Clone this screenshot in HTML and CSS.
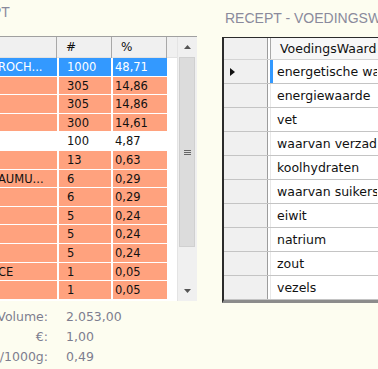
FILE: index.html
```html
<!DOCTYPE html>
<html>
<head>
    <title>Recept</title>
    <link rel="stylesheet" href="styles.css">
</head>
<body>
    <div class="page">
        <!-- Ingrediënten van het recept -->
        <section class="panel panel-left">
            <div class="panel-title title-left">RECEPT</div>
            <div class="grid-left">
                <div class="ltable">
                    <div class="lhead"><span></span><span>#</span><span>%</span><span></span></div>
                    <div class="lrows">
                        <div class="lrow selected"><span class="name">ROCH...</span><span class="num">1000</span><span class="pct">48,71</span></div>
                        <div class="lrow"><span class="name"></span><span class="num">305</span><span class="pct">14,86</span></div>
                        <div class="lrow"><span class="name"></span><span class="num">305</span><span class="pct">14,86</span></div>
                        <div class="lrow"><span class="name"></span><span class="num">300</span><span class="pct">14,61</span></div>
                        <div class="lrow plain"><span class="name"></span><span class="num">100</span><span class="pct">4,87</span></div>
                        <div class="lrow"><span class="name"></span><span class="num">13</span><span class="pct">0,63</span></div>
                        <div class="lrow"><span class="name">AUMU...</span><span class="num">6</span><span class="pct">0,29</span></div>
                        <div class="lrow"><span class="name"></span><span class="num">6</span><span class="pct">0,29</span></div>
                        <div class="lrow"><span class="name"></span><span class="num">5</span><span class="pct">0,24</span></div>
                        <div class="lrow"><span class="name"></span><span class="num">5</span><span class="pct">0,24</span></div>
                        <div class="lrow"><span class="name"></span><span class="num">5</span><span class="pct">0,24</span></div>
                        <div class="lrow"><span class="name">CE</span><span class="num">1</span><span class="pct">0,05</span></div>
                        <div class="lrow"><span class="name"></span><span class="num">1</span><span class="pct">0,05</span></div>
                    </div>
                </div>
                <div class="vscroll">
                    <div class="vbtn">
                        <svg width="7" height="4" viewBox="0 0 7 4"><polygon points="0,4 3.5,0 7,4" fill="#555"/></svg>
                    </div>
                    <div class="vthumb">
                        <svg width="7" height="5" viewBox="0 0 7 5"><path d="M0 0.5h7M0 2.5h7M0 4.5h7" stroke="#666" stroke-width="1"/></svg>
                    </div>
                    <div class="vtrack"></div>
                    <div class="vbtn">
                        <svg width="7" height="4" viewBox="0 0 7 4"><polygon points="0,0 3.5,4 7,0" fill="#555"/></svg>
                    </div>
                </div>
            </div>
            <div class="totals">
                <span class="label">Volume:</span><span class="value">2.053,00</span>
                <span class="label">€:</span><span class="value">1,00</span>
                <span class="label">€/1000g:</span><span class="value">0,49</span>
            </div>
        </section>

        <!-- Voedingswaarden -->
        <section class="panel panel-right">
            <div class="panel-title title-right">RECEPT - VOEDINGSWAARDEN</div>
            <div class="grid-right">
                <div class="rrow rhead"><span class="rh"></span><span class="rcell">VoedingsWaarde</span><span class="rfill"></span></div>
                <div class="rrow current">
                    <span class="rh">
                        <svg width="5" height="8" viewBox="0 0 5 8"><polygon points="0,0 5,4 0,8" fill="#111"/></svg>
                    </span>
                    <span class="rcell">energetische waarde</span><span class="rfill"></span>
                </div>
                <div class="rrow"><span class="rh"></span><span class="rcell">energiewaarde</span><span class="rfill"></span></div>
                <div class="rrow"><span class="rh"></span><span class="rcell">vet</span><span class="rfill"></span></div>
                <div class="rrow"><span class="rh"></span><span class="rcell">waarvan verzadigd</span><span class="rfill"></span></div>
                <div class="rrow"><span class="rh"></span><span class="rcell">koolhydraten</span><span class="rfill"></span></div>
                <div class="rrow"><span class="rh"></span><span class="rcell">waarvan suikers</span><span class="rfill"></span></div>
                <div class="rrow"><span class="rh"></span><span class="rcell">eiwit</span><span class="rfill"></span></div>
                <div class="rrow"><span class="rh"></span><span class="rcell">natrium</span><span class="rfill"></span></div>
                <div class="rrow"><span class="rh"></span><span class="rcell">zout</span><span class="rfill"></span></div>
                <div class="rrow"><span class="rh"></span><span class="rcell">vezels</span><span class="rfill"></span></div>
            </div>
        </section>
    </div>
</body>
</html>
```

FILE: styles.css
```css
body {
    margin: 0;
    background: #fdfdf0;
    font-family: "DejaVu Sans", Verdana, sans-serif;
    overflow: hidden;
}

.page {
    display: flex;
    align-items: flex-start;
    width: 378px;
    height: 369px;
    overflow: hidden;
}

.panel {
    flex: none;
}

.panel-left {
    width: 197px;
}

.panel-right {
    width: 320px;
    margin-left: 25px;
}

.panel-title {
    font-family: "Liberation Sans", Arial, sans-serif;
    font-size: 14px;
    line-height: 16px;
    color: #8a8a9c;
    white-space: nowrap;
}

.title-left {
    margin-left: -47px;
    padding-top: 4px;
}

.title-right {
    padding-top: 10px;
    padding-left: 3px;
}

/* left grid */

.grid-left {
    display: flex;
    margin-top: 16px;
    height: 264px;
    border-top: 1px solid #a0a0a0;
    background: #fff;
    overflow: hidden;
}

.ltable {
    width: 177px;
    background: #fff;
}

.lhead {
    display: grid;
    grid-template-columns: 57px 55px 55px 10px;
    height: 20px;
    border-bottom: 1px solid #e2e2e2;
    background: #f0f0f0;
}

.lhead span {
    border-right: 1px solid #a8a8a8;
    padding-left: 9px;
    font-size: 12px;
    line-height: 21px;
    color: #111;
}

.lhead span:last-child {
    border-right: none;
}

.lrows {
    display: grid;
    grid-auto-rows: 17.6px;
    row-gap: 1px;
}

.lrow {
    display: grid;
    grid-template-columns: 57px 52px 54px;
    column-gap: 2px;
}

.lrow span {
    background: #ffa27e;
    font-size: 11.5px;
    line-height: 18.6px;
    color: #111;
    white-space: nowrap;
    overflow: hidden;
}

.lrow .name {
    text-indent: -2px;
}

.lrow .num {
    padding-left: 8px;
}

.lrow .pct {
    padding-left: 2px;
}

.lrow.selected span {
    background: #3399ff;
    color: #fff;
}

.lrow.plain span {
    background: #fff;
}

.vscroll {
    width: 20px;
    display: flex;
    flex-direction: column;
    background: #f0f0f0;
    border-left: 1px solid #e4e4e4;
}

.vbtn {
    height: 20px;
    display: flex;
    align-items: center;
    justify-content: center;
    flex: none;
}

.vthumb {
    height: 188px;
    margin: 0 2px 0 1px;
    background: #dcdcdc;
    border: 1px solid #d0d0d0;
    display: flex;
    align-items: center;
    justify-content: center;
    flex: none;
}

.vtrack {
    flex: 1;
}

.totals {
    display: grid;
    grid-template-columns: 48px auto;
    column-gap: 18px;
    margin-top: 6px;
    font-size: 12.5px;
    line-height: 20px;
    color: #7d7d8f;
    white-space: nowrap;
}

.totals .label {
    justify-self: end;
}

/* right grid */

.grid-right {
    margin-top: 11px;
    border-left: 2px solid #2b2b2b;
    border-top: 1px solid #2b2b2b;
    border-bottom: 3px solid #8c8c8c;
    background: #fff;
}

.rrow {
    display: flex;
    height: 23px;
    border-bottom: 1px solid #c4c4c4;
}

.rrow.rhead {
    height: 21px;
    border-bottom: 1px solid #d4d4d4;
}

.rh {
    flex: none;
    width: 44px;
    background: #f0f0f0;
    border-right: 1px solid #9c9c9c;
    display: flex;
    align-items: center;
    padding-left: 6px;
    box-sizing: border-box;
}

.rcell {
    flex: none;
    width: 107px;
    box-sizing: border-box;
    overflow: hidden;
    margin-left: 2px;
    padding-left: 6px;
    font-size: 12.5px;
    line-height: 23px;
    color: #111;
    white-space: nowrap;
    border-left: 1px solid #e8e8e8;
}

.rfill {
    flex: 1;
}

.rhead .rcell {
    line-height: 21px;
    padding-left: 9px;
    background: #f7f7f7;
    border-left: 1px solid #a8a8a8;
}

.rhead .rfill {
    background: #f7f7f7;
}

.current .rcell {
    border-left: 3px solid #3399ff;
    padding-left: 4px;
}
```
